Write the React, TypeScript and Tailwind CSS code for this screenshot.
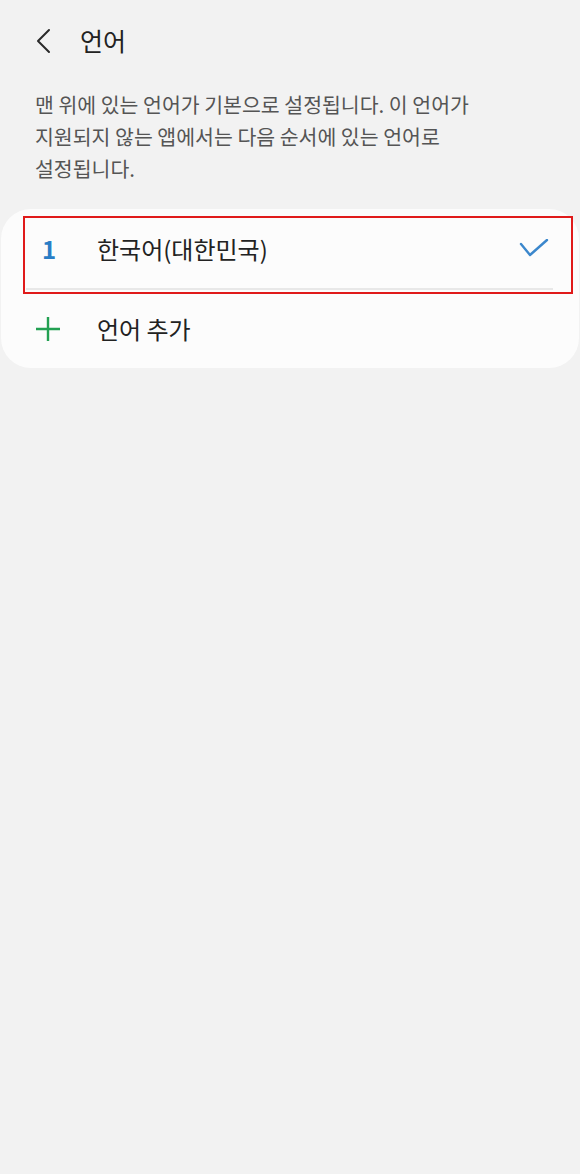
import React from "react";

export default function App() {
  const font = { fontFamily: '"Noto Sans CJK KR", "Noto Sans", sans-serif' };
  return (
    <div
      className="w-[580px] min-h-[1174px] bg-[#f2f2f2] flex flex-col"
      style={font}
    >
      {/* Header */}
      <div className="h-[82px] flex items-center">
        <div className="pl-[34px] w-[80px] flex items-center">
          <svg width="18" height="26" viewBox="0 0 18 26" fill="none">
            <path
              d="M15 2 L4 13 L15 24"
              stroke="#2a2a2a"
              strokeWidth="2"
              strokeLinecap="round"
              strokeLinejoin="round"
            />
          </svg>
        </div>
        <div className="text-[25px] leading-none text-[#222222] -mt-[1px]">언어</div>
      </div>

      {/* Description */}
      <div className="mt-[6px] px-[35px] text-[20.5px] leading-[32px] text-[#555555]">
        맨 위에 있는 언어가 기본으로 설정됩니다. 이 언어가
        <br />
        지원되지 않는 앱에서는 다음 순서에 있는 언어로
        <br />
        설정됩니다.
      </div>

      {/* Card */}
      <div className="relative mt-[25px] mx-[1px] bg-[#fcfcfc] rounded-[30px] flex flex-col">
        <div className="h-[79px] flex items-center">
          <div className="w-[96px] pl-[41px] text-[24px] font-semibold text-[#2a7dc6] leading-none">
            1
          </div>
          <div className="flex-1 text-[24px] text-[#222222] leading-none">
            한국어(대한민국)
          </div>
          <div className="pr-[30px]">
            <svg width="30" height="20" viewBox="0 0 30 20" fill="none">
              <path
                d="M2 5 L11 16 L28 1"
                stroke="#3b87cc"
                strokeWidth="2.4"
                strokeLinecap="round"
                strokeLinejoin="round"
              />
            </svg>
          </div>
        </div>
        <div className="h-[2px] ml-[25px] mr-[26px] bg-[#e8e8e8]" />
        <div className="h-[78px] flex items-center">
          <div className="w-[96px] pl-[34px]">
            <svg width="26" height="26" viewBox="0 0 26 26" fill="none">
              <path d="M13 1 V25 M1 13 H25" stroke="#22a052" strokeWidth="2.4" />
            </svg>
          </div>
          <div className="text-[24px] text-[#222222] leading-none">언어 추가</div>
        </div>

        {/* annotation overlay */}
        <div className="absolute left-[22px] top-[7px] w-[550px] h-[78px] border-2 border-[#e01a1a] pointer-events-none" />
      </div>
    </div>
  );
}
